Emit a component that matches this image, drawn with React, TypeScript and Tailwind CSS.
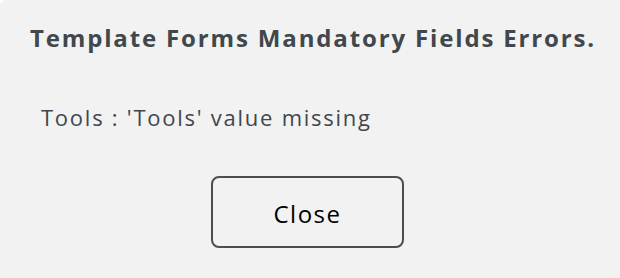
export default function App() {
  return (
    <div
      className="w-[620px] h-[278px] bg-[#f2f2f2] rounded-tl-[6px] flex flex-col text-[#40474d]"
      style={{ fontFamily: "'Open Sans', Lato, sans-serif" }}
    >
      <h1 className="pt-[21px] text-center text-[24px] leading-[34px] font-bold tracking-[1.85px] pl-[6px]">
        Template Forms Mandatory Fields Errors.
      </h1>
      <p className="mt-[47px] pl-[41px] text-[22px] leading-[30px] tracking-[1.75px]">
        Tools : 'Tools' value missing
      </p>
      <div className="mt-[44px] pl-[211px]">
        <button className="w-[193px] h-[72px] pt-[4px] border-2 border-[#4d4d4d] rounded-[8px] text-[24px] tracking-[1.5px] text-black">
          Close
        </button>
      </div>
    </div>
  );
}
